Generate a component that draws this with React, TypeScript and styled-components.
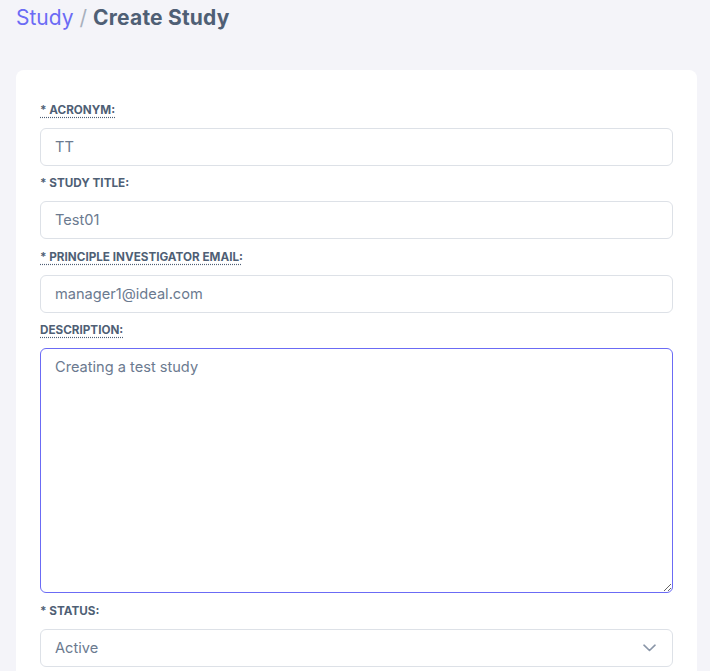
import React from "react";
import styled, { createGlobalStyle } from "styled-components";

const Global = createGlobalStyle`
  html, body { margin: 0; padding: 0; background: #f4f4f9; }
  body { font-family: "Inter", "Noto Sans", sans-serif; }
  * { box-sizing: border-box; }
`;

const Page = styled.div`
  padding: 4px 13px 0 16px;
  display: flex;
  flex-direction: column;
`;

const Breadcrumb = styled.h1`
  margin: 0;
  font-size: 21px;
  line-height: 28px;
  font-weight: 400;
  display: flex;
  gap: 6px;
  align-items: baseline;
`;

const Crumb = styled.span`
  color: #6b6bf5;
`;

const Sep = styled.span`
  color: #a8b0bd;
`;

const Current = styled.span`
  color: #4f5f75;
  font-weight: 700;
  letter-spacing: 0.2px;
`;

const Card = styled.div`
  margin-top: 38px;
  background: #ffffff;
  border-radius: 8px;
  padding: 30.5px 24px 24px 24px;
  display: flex;
  flex-direction: column;
  min-height: 640px;
`;

const Field = styled.div`
  display: flex;
  flex-direction: column;
  margin-bottom: 8.5px;
`;

const Label = styled.label`
  font-size: 11.7px;
  line-height: 18px;
  font-weight: 700;
  color: #4f5f75;
  text-transform: uppercase;
  margin-bottom: 9px;
`;

const Abbr = styled.abbr<{ $dotted?: boolean }>`
  text-decoration: ${(p) => (p.$dotted ? "underline dotted" : "none")};
  text-underline-offset: 3px;
  cursor: help;
`;

const Input = styled.input`
  width: 100%;
  height: 38px;
  border: 1px solid #dde1e7;
  border-radius: 6px;
  padding: 0 14px;
  font-family: inherit;
  font-size: 14.6px;
  color: #6b7a8f;
  background: #fff;
  outline: none;
`;

const TextArea = styled.textarea`
  width: 100%;
  height: 245px;
  border: 1px solid #6b6bf5;
  border-radius: 6px;
  padding: 7px 14px;
  font-family: inherit;
  font-size: 14.6px;
  line-height: 22px;
  color: #6b7a8f;
  background: #fff;
  outline: none;
  resize: vertical;
  caret-color: #3d4653;
`;

const SelectWrap = styled.div`
  position: relative;
`;

const Select = styled.select`
  width: 100%;
  height: 38px;
  border: 1px solid #dde1e7;
  border-radius: 6px;
  padding: 0 14px;
  font-family: inherit;
  font-size: 14.6px;
  color: #6b7a8f;
  background: #fff;
  appearance: none;
  outline: none;
`;

const Chevron = styled.svg`
  position: absolute;
  right: 17px;
  top: 15px;
  pointer-events: none;
`;

export default function App() {
  return (
    <>
      <Global />
      <Page>
        <Breadcrumb>
          <Crumb>Study</Crumb>
          <Sep>/</Sep>
          <Current>Create Study</Current>
        </Breadcrumb>
        <Card>
          <Field>
            <Label>
              <Abbr $dotted title="Required">* Acronym:</Abbr>
            </Label>
            <Input defaultValue="TT" />
          </Field>
          <Field>
            <Label>
              <Abbr>* Study Title:</Abbr>
            </Label>
            <Input defaultValue="Test01" />
          </Field>
          <Field>
            <Label>
              <Abbr $dotted title="Required">* Principle Investigator Email:</Abbr>
            </Label>
            <Input defaultValue="manager1@ideal.com" />
          </Field>
          <Field>
            <Label>
              <Abbr $dotted title="Optional">Description:</Abbr>
            </Label>
            <TextArea autoFocus defaultValue="Creating a test study" onFocus={(e) => { const l = e.target.value.length; e.target.setSelectionRange(l, l); }} />
          </Field>
          <Field>
            <Label>
              <Abbr>* Status:</Abbr>
            </Label>
            <SelectWrap>
              <Select defaultValue="Active">
                <option>Active</option>
                <option>Inactive</option>
              </Select>
              <Chevron width="13" height="8" viewBox="0 0 13 8" fill="none">
                <path d="M1 1.2l5.5 5.3 5.5-5.3" stroke="#8a96a8" strokeWidth="1.6" strokeLinecap="round" strokeLinejoin="round" />
              </Chevron>
            </SelectWrap>
          </Field>
        </Card>
      </Page>
    </>
  );
}
